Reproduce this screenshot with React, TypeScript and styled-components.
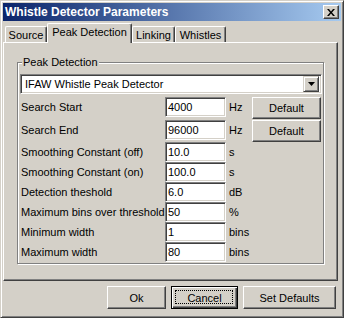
import { Fragment } from "react"
import styled, { createGlobalStyle } from "styled-components"

const FACE = "#D4D0C8"
const SHADOW = "#808080"
const DARK = "#404040"

const GlobalStyle = createGlobalStyle`
  html, body {
    margin: 0;
    padding: 0;
    background: ${FACE};
  }
  body {
    font-family: "Liberation Sans", Arial, sans-serif;
    font-size: 11px;
    color: #000;
  }
`

const Window = styled.div`
  width: 344px;
  height: 318px;
  box-sizing: border-box;
  background: ${FACE};
  border: 1px solid;
  border-color: ${FACE} ${DARK} ${DARK} ${FACE};
  box-shadow: inset 1px 1px 0 #fff, inset -1px -1px 0 ${SHADOW};
  padding: 2px;
  display: flex;
  flex-direction: column;
`

const TitleBar = styled.div`
  height: 18px;
  display: flex;
  align-items: center;
  justify-content: space-between;
  padding: 0 2px 0 2px;
  background: linear-gradient(to right, #0a246a, #a6caf0);
`

const Title = styled.span`
  color: #fff;
  font-weight: bold;
  font-size: 12px;
`

const CloseButton = styled.div`
  width: 16px;
  height: 14px;
  box-sizing: border-box;
  background: ${FACE};
  border: 1px solid;
  border-color: #fff ${DARK} ${DARK} #fff;
  box-shadow: inset -1px -1px 0 ${SHADOW};
  display: flex;
  align-items: center;
  justify-content: center;
`

const TabStrip = styled.div`
  margin-top: 2px;
  height: 19px;
  display: flex;
  align-items: flex-end;
  padding-left: 2px;
  position: relative;
  z-index: 1;
`

const Tab = styled.div<{ $w: number; $active?: boolean }>`
  width: ${p => p.$w}px;
  height: ${p => (p.$active ? 20 : 16)}px;
  margin-bottom: ${p => (p.$active ? -1 : 0)}px;
  box-sizing: border-box;
  background: ${FACE};
  border-top: 1px solid #fff;
  border-left: 1px solid #fff;
  border-right: 1px solid ${DARK};
  border-radius: 2px 2px 0 0;
  box-shadow: inset -1px 0 0 ${SHADOW};
  display: flex;
  justify-content: center;
  padding-top: ${p => (p.$active ? 2 : 2)}px;
  font-size: 11px;
  white-space: nowrap;
`

const Panel = styled.div`
  width: 335px;
  height: 239px;
  box-sizing: border-box;
  border: 1px solid;
  border-color: #fff ${DARK} ${DARK} #fff;
  box-shadow: inset -1px -1px 0 ${SHADOW};
  padding: 19px 0 0 13px;
`

const Group = styled.div`
  position: relative;
  width: 307px;
  height: 202px;
  box-sizing: border-box;
  border: 1px solid ${SHADOW};
  box-shadow: inset 1px 1px 0 #fff, 1px 1px 0 #fff;
  padding: 11px 1px 0 2px;
`

const Legend = styled.span`
  position: absolute;
  top: -7px;
  left: 4px;
  padding: 0 1px;
  background: ${FACE};
  font-size: 11px;
  line-height: 13px;
`

const Combo = styled.div`
  height: 20px;
  box-sizing: border-box;
  background: #fff;
  border: 1px solid;
  border-color: ${SHADOW} #fff #fff ${SHADOW};
  box-shadow: inset 1px 1px 0 ${DARK}, inset -1px -1px 0 ${FACE};
  display: flex;
  align-items: center;
  justify-content: space-between;
  padding: 2px 2px 2px 4px;
  font-size: 11px;
`

const DropButton = styled.div`
  width: 16px;
  height: 16px;
  box-sizing: border-box;
  background: ${FACE};
  border: 1px solid;
  border-color: ${FACE} ${DARK} ${DARK} ${FACE};
  box-shadow: inset 1px 1px 0 #fff, inset -1px -1px 0 ${SHADOW};
  display: flex;
  align-items: center;
  justify-content: center;
`

const Rows = styled.div`
  margin-top: 3px;
  display: grid;
  grid-template-columns: 145px 61px 26px 69px;
  grid-template-rows: 23px 22px repeat(6, 20px);
  align-items: start;
`

const Label = styled.span`
  padding-left: 1px;
  font-size: 11px;
  line-height: 20px;
  white-space: nowrap;
`

const Edit = styled.div`
  height: 20px;
  box-sizing: border-box;
  background: #fff;
  border: 1px solid;
  border-color: ${SHADOW} #fff #fff ${SHADOW};
  box-shadow: inset 1px 1px 0 ${DARK}, inset -1px -1px 0 ${FACE};
  padding: 0 2px;
  font-size: 11px;
  line-height: 18px;
`

const Unit = styled.span`
  padding-left: 3px;
  font-size: 11px;
  line-height: 20px;
`

const Button = styled.div<{ $w: number; $h?: number; $focused?: boolean }>`
  width: ${p => p.$w}px;
  height: ${p => p.$h ?? 23}px;
  box-sizing: border-box;
  background: ${FACE};
  border: 1px solid;
  border-color: ${p => (p.$focused ? "#000" : `#fff ${DARK} ${DARK} #fff`)};
  box-shadow: ${p =>
    p.$focused
      ? `inset 1px 1px 0 #fff, inset -1px -1px 0 ${DARK}, inset -2px -2px 0 ${SHADOW}`
      : `inset -1px -1px 0 ${SHADOW}`};
  display: flex;
  align-items: center;
  justify-content: center;
  font-size: 11px;
  position: relative;
`

const FocusRing = styled.span`
  position: absolute;
  inset: 3px 4px 4px 3px;
  border: 1px dotted #000;
`

const ButtonBar = styled.div`
  margin-top: 5px;
  display: flex;
  justify-content: flex-end;
  gap: 5px;
  padding-right: 5px;
`

type Row = { label: string; value: string; unit: string; hasDefault?: boolean }

const rows: Row[] = [
  { label: "Search Start", value: "4000", unit: "Hz", hasDefault: true },
  { label: "Search End", value: "96000", unit: "Hz", hasDefault: true },
  { label: "Smoothing Constant (off)", value: "10.0", unit: "s" },
  { label: "Smoothing Constant (on)", value: "100.0", unit: "s" },
  { label: "Detection theshold", value: "6.0", unit: "dB" },
  { label: "Maximum bins over threshold", value: "50", unit: "%" },
  { label: "Minimum width", value: "1", unit: "bins" },
  { label: "Maximum width", value: "80", unit: "bins" },
]

const tabs = [
  { name: "Source", w: 42 },
  { name: "Peak Detection", w: 85, active: true },
  { name: "Linking", w: 43 },
  { name: "Whistles", w: 51 },
]

export default function App() {
  return (
    <>
      <GlobalStyle />
      <Window>
        <TitleBar>
          <Title>Whistle Detector Parameters</Title>
          <CloseButton>
            <svg width="8" height="7" viewBox="0 0 8 7">
              <path d="M0 0h2l2 2.5L6 0h2L5 3.5 8 7H6L4 4.5 2 7H0l3-3.5z" fill="#000" />
            </svg>
          </CloseButton>
        </TitleBar>
        <TabStrip>
          {tabs.map(t => (
            <Tab key={t.name} $w={t.w} $active={t.active}>
              {t.name}
            </Tab>
          ))}
        </TabStrip>
        <Panel>
          <Group>
            <Legend>Peak Detection</Legend>
            <Combo>
              <span>IFAW Whistle Peak Detector</span>
              <DropButton>
                <svg width="7" height="4" viewBox="0 0 7 4">
                  <path d="M0 0h7L3.5 4z" fill="#000" />
                </svg>
              </DropButton>
            </Combo>
            <Rows>
              {rows.map(r => (
                <Fragment key={r.label}>
                  <Label>{r.label}</Label>
                  <Edit>{r.value}</Edit>
                  <Unit>{r.unit}</Unit>
                  {r.hasDefault ? (
                    <Button $w={69} $h={22}>
                      Default
                    </Button>
                  ) : (
                    <span />
                  )}
                </Fragment>
              ))}
            </Rows>
          </Group>
        </Panel>
        <ButtonBar>
          <Button $w={59}>Ok</Button>
          <Button $w={67} $focused>
            Cancel
            <FocusRing />
          </Button>
          <Button $w={93}>Set Defaults</Button>
        </ButtonBar>
      </Window>
    </>
  )
}
